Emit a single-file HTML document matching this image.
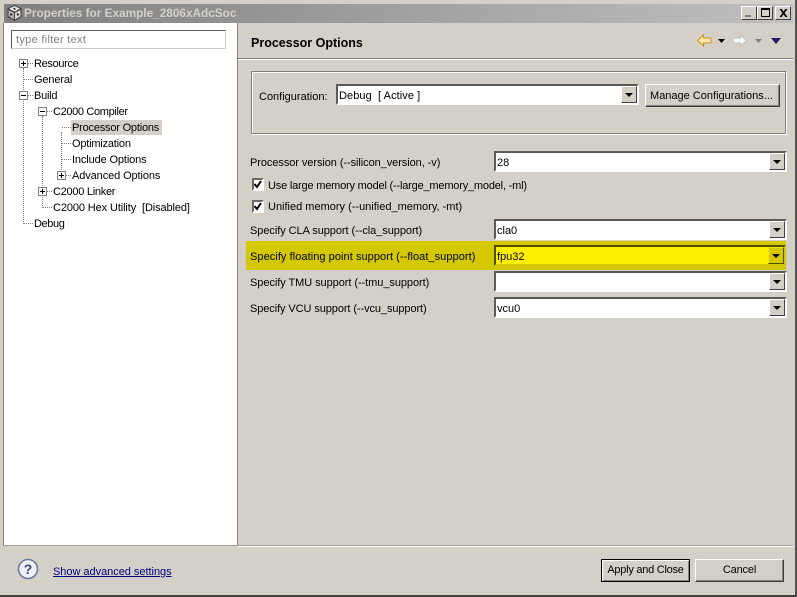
<!DOCTYPE html>
<html><head><meta charset="utf-8"><style>
html,body{margin:0;padding:0}
body{width:797px;height:597px;position:relative;overflow:hidden;background:#d4d0c8;font:11px/13px "Liberation Sans",sans-serif;color:#000}
.a{position:absolute}
.t{position:absolute;white-space:nowrap;height:13px;line-height:13px;font-size:11px}
.combo{position:absolute;box-sizing:border-box;height:21px;background:#fff;border:2px solid;border-color:#5a5a56 #fff #fff #5a5a56;outline:0}
.combo .v{position:absolute;left:1px;top:4px;font-size:11px;line-height:13px;white-space:nowrap}
.btn{position:absolute;right:0;top:0;width:16px;height:17px;box-sizing:border-box;background:#d4d0c8;border:1px solid;border-color:#fff #404040 #404040 #fff}
.btn:after{content:"";position:absolute;left:3px;top:6px;border:4px solid transparent;border-top:4px solid #000;border-bottom:0}
.pb{position:absolute;box-sizing:border-box;background:#d4d0c8;border:1px solid;border-color:#fff #404040 #404040 #fff;box-shadow:inset -1px -1px 0 #808080;text-align:center;font-size:11px}
.exp{position:absolute;width:9px;height:9px;box-sizing:border-box;border:1px solid #808080;background:#fff}
.exp:before{content:"";position:absolute;left:1px;top:3px;width:5px;height:1px;background:#000}
.exp.p:after{content:"";position:absolute;left:3px;top:1px;width:1px;height:5px;background:#000}
.dv{position:absolute;width:1px;border-left:1px dotted #808080}
.dh{position:absolute;height:1px;border-top:1px dotted #808080}
.cb{position:absolute;width:12px;height:13px;box-sizing:border-box;background:#fff;border:2px solid;border-color:#6a6a66 #fff #fff #6a6a66}
.wb{position:absolute;top:6px;width:16px;height:14px;box-sizing:border-box;background:#d4d0c8;border:1px solid;border-color:#fff #404040 #404040 #fff}
</style></head><body>
<div class="a" style="left:4px;top:4px;width:789px;height:19px;background:linear-gradient(90deg,#808080,#c0c0c0)"></div>
<svg class="a" style="left:6px;top:4px" width="17" height="18" viewBox="0 0 17 18"><path d="M8.500 1l7 3.500v8.500l-7 4-7-4V4.500z" fill="#3c3c3c"/><path d="M8.500 2l5.500 2.800-5.500 2.800L3 4.800z" fill="#e8e8e8"/><path d="M2.500 6l5.500 2.800v6.700l-5.500-3.200z" fill="#b0b0b0"/><path d="M14.500 6l-5.500 2.800v6.700l5.500-3.200z" fill="#d8d8d8"/><circle cx="5.200" cy="10.500" r="1.100" fill="#222"/><circle cx="11.800" cy="10.500" r="1.100" fill="#222"/><circle cx="8.500" cy="4.800" r="1.100" fill="#333"/></svg>
<div class="t" style="left:24px;top:7px;color:#d4d0c8;font-weight:bold;font-size:11.8px">Properties for Example_2806xAdcSoc</div>
<div class="wb" style="left:741px"><div class="a" style="left:3px;bottom:2px;width:6px;height:2px;background:#808080"></div></div>
<div class="wb" style="left:757px"><div class="a" style="left:3px;top:1px;width:9px;height:9px;box-sizing:border-box;border:1px solid #000;border-top-width:2px"></div></div>
<div class="wb" style="left:775px"><svg class="a" style="left:3px;top:2px" width="9" height="8"><path d="M1 0l6 8M2 0l6 8M7 0L1 8M8 0L2 8" stroke="#000" fill="none"/></svg></div>

<!-- left tree panel -->
<div class="a" style="left:4px;top:23px;width:233px;height:522px;background:#fff"></div>
<div class="a" style="left:237px;top:23px;width:1px;height:522px;background:#808080"></div>
<div class="a" style="left:4px;top:545px;width:789px;height:1px;background:#a0a0a0"></div>
<div class="a" style="left:238px;top:546px;width:555px;height:1px;background:#fff"></div>
<div class="a" style="left:795px;top:0;width:2px;height:597px;background:#505050"></div>
<div class="a" style="left:0;top:595px;width:797px;height:2px;background:#404040"></div>
<div class="a" style="left:3px;top:23px;width:1px;height:523px;background:#808080"></div>

<div class="a" style="left:11px;top:30px;width:215px;height:19px;box-sizing:border-box;background:#fff;border:1px solid;border-color:#5a5a56 #d0ccc4 #d0ccc4 #5a5a56"></div>
<div class="t" style="left:16px;top:34px;color:#808080;letter-spacing:.3px">type filter text</div>

<div class="dv" style="left:23px;top:68px;height:156px"></div>
<div class="dv" style="left:42px;top:116px;height:92px"></div>
<div class="dv" style="left:61px;top:132px;height:44px"></div>
<div class="dh" style="left:28px;top:63px;width:5px"></div>
<div class="dh" style="left:24px;top:79px;width:9px"></div>
<div class="dh" style="left:28px;top:95px;width:5px"></div>
<div class="dh" style="left:24px;top:223px;width:9px"></div>
<div class="dh" style="left:47px;top:111px;width:5px"></div>
<div class="dh" style="left:47px;top:191px;width:5px"></div>
<div class="dh" style="left:43px;top:207px;width:9px"></div>
<div class="dh" style="left:62px;top:127px;width:9px"></div>
<div class="dh" style="left:62px;top:143px;width:9px"></div>
<div class="dh" style="left:62px;top:159px;width:9px"></div>
<div class="dh" style="left:66px;top:175px;width:5px"></div>
<div class="exp p" style="left:19px;top:59px"></div>
<div class="exp" style="left:19px;top:91px"></div>
<div class="exp" style="left:38px;top:107px"></div>
<div class="exp p" style="left:57px;top:171px"></div>
<div class="exp p" style="left:38px;top:187px"></div>
<div class="a" style="left:71px;top:120px;width:91px;height:15px;background:#d4d0c8"></div>
<div class="t" style="left:34px;top:58px;letter-spacing:-.33px">Resource</div>
<div class="t" style="left:34px;top:74px;letter-spacing:-.13px">General</div>
<div class="t" style="left:34px;top:90px;letter-spacing:-.25px">Build</div>
<div class="t" style="left:53px;top:106px;letter-spacing:-.34px">C2000 Compiler</div>
<div class="t" style="left:72px;top:122px;letter-spacing:-.2px">Processor Options</div>
<div class="t" style="left:72px;top:138px;letter-spacing:-.2px">Optimization</div>
<div class="t" style="left:72px;top:154px;letter-spacing:-.13px">Include Options</div>
<div class="t" style="left:72px;top:170px;letter-spacing:-.1px">Advanced Options</div>
<div class="t" style="left:53px;top:186px;letter-spacing:-.27px">C2000 Linker</div>
<div class="t" style="left:53px;top:202px;letter-spacing:-.11px">C2000 Hex Utility&nbsp; [Disabled]</div>
<div class="t" style="left:34px;top:218px;letter-spacing:-.4px">Debug</div>

<!-- header -->
<div class="t" style="left:251px;top:37px;font-weight:bold;font-size:12.5px">Processor Options</div>
<svg class="a" style="left:696px;top:33px" width="16" height="15" viewBox="0 0 16 15"><path d="M1.500 7.500l6-5.500v3h6.500q1 0 1 1v3q0 1-1 1H7.500v3z" fill="#ffe9a8" stroke="#cf8f18"/></svg>
<svg class="a" style="left:718px;top:39px" width="7" height="4"><path d="M0 0h7L3.500 4z" fill="#000"/></svg>
<svg class="a" style="left:732px;top:33px" width="16" height="15" viewBox="0 0 16 15"><path d="M14.500 7.500l-6-5.500v3H2q-1 0-1 1v3q0 1 1 1h6.500v3z" fill="#f6f6f6" stroke="#c0c0c0"/></svg>
<svg class="a" style="left:755px;top:39px" width="7" height="4"><path d="M0 0h7L3.500 4z" fill="#808080"/></svg>
<svg class="a" style="left:771px;top:38px" width="10" height="6"><path d="M0 0h10L5 6z" fill="#2a1a5e"/></svg>
<div class="a" style="left:238px;top:58px;width:555px;height:1px;background:#808080"></div>
<div class="a" style="left:238px;top:59px;width:555px;height:1px;background:#fff"></div>

<!-- configuration group -->
<div class="a" style="left:251px;top:71px;width:535px;height:63px;box-sizing:border-box;border:1px solid #808080;box-shadow:inset 1px 1px 0 #fff,1px 1px 0 #fff"></div>
<div class="t" style="left:259px;top:91px">Configuration:</div>
<div class="combo" style="left:336px;top:84px;width:303px"><div class="v" style="letter-spacing:.07px">Debug&nbsp; [ Active ]</div><div class="btn"></div></div>
<div class="pb" style="left:645px;top:84px;width:135px;height:23px;line-height:22px;text-indent:-2px">Manage Configurations...</div>

<!-- options -->
<div class="t" style="left:250px;top:157px;letter-spacing:-.07px">Processor version (--silicon_version, -v)</div>
<div class="combo" style="left:494px;top:151px;width:293px"><div class="v">28</div><div class="btn"></div></div>
<div class="cb" style="left:252px;top:178px"><svg class="a" style="left:0;top:0" width="8" height="9"><path d="M.5 4l2.500 3 4-6" stroke="#000" stroke-width="2" fill="none"/></svg></div>
<div class="t" style="left:268px;top:180px;letter-spacing:-.19px">Use large memory model (--large_memory_model, -ml)</div>
<div class="cb" style="left:252px;top:200px"><svg class="a" style="left:0;top:0" width="8" height="9"><path d="M.5 4l2.500 3 4-6" stroke="#000" stroke-width="2" fill="none"/></svg></div>
<div class="t" style="left:268px;top:201px">Unified memory (--unified_memory, -mt)</div>
<div class="t" style="left:250px;top:225px;letter-spacing:-.06px">Specify CLA support (--cla_support)</div>
<div class="combo" style="left:494px;top:219px;width:293px"><div class="v">cla0</div><div class="btn"></div></div>

<div class="a" style="left:246px;top:241px;width:540px;height:29px;background:#d4c800"></div>
<div class="a" style="left:494px;top:245px;width:292px;height:21px;background:#fff000;box-sizing:border-box;border:2px solid;border-color:#504c00 #d4c800 #d4c800 #504c00"><div class="a" style="left:1px;top:4px;font-size:11px;line-height:13px">fpu32</div><div class="a" style="right:0;top:0;width:16px;height:17px;box-sizing:border-box;background:#d4c800;border:1px solid;border-color:#f0e800 #504c00 #504c00 #f0e800"><div class="a" style="left:3px;top:6px;border:4px solid transparent;border-top:4px solid #000;border-bottom:0"></div></div></div>
<div class="t" style="left:250px;top:251px;letter-spacing:.06px">Specify floating point support (--float_support)</div>

<div class="t" style="left:250px;top:277px;letter-spacing:-.06px">Specify TMU support (--tmu_support)</div>
<div class="combo" style="left:494px;top:271px;width:293px"><div class="btn"></div></div>
<div class="t" style="left:250px;top:303px;letter-spacing:-.09px">Specify VCU support (--vcu_support)</div>
<div class="combo" style="left:494px;top:297px;width:293px"><div class="v">vcu0</div><div class="btn"></div></div>

<!-- footer -->
<svg class="a" style="left:17px;top:558px" width="22" height="22" viewBox="0 0 22 22"><circle cx="11" cy="11" r="9.500" fill="#eef0f6" stroke="#6a7a9a" stroke-width="1.600"/><text x="11" y="16" text-anchor="middle" font-family="Liberation Sans" font-weight="bold" font-size="14" fill="#3a4a6a">?</text></svg>
<div class="t" style="left:53px;top:566px;color:#000080;text-decoration:underline;letter-spacing:-.03px">Show advanced settings</div>
<div class="pb" style="left:601px;top:559px;width:89px;height:23px;line-height:21px;border:1px solid #000;box-shadow:inset 1px 1px 0 #fff,inset -1px -1px 0 #808080;letter-spacing:-.25px">Apply and Close</div>
<div class="pb" style="left:695px;top:559px;width:89px;height:23px;line-height:21px;letter-spacing:-.16px">Cancel</div>
</body></html>
